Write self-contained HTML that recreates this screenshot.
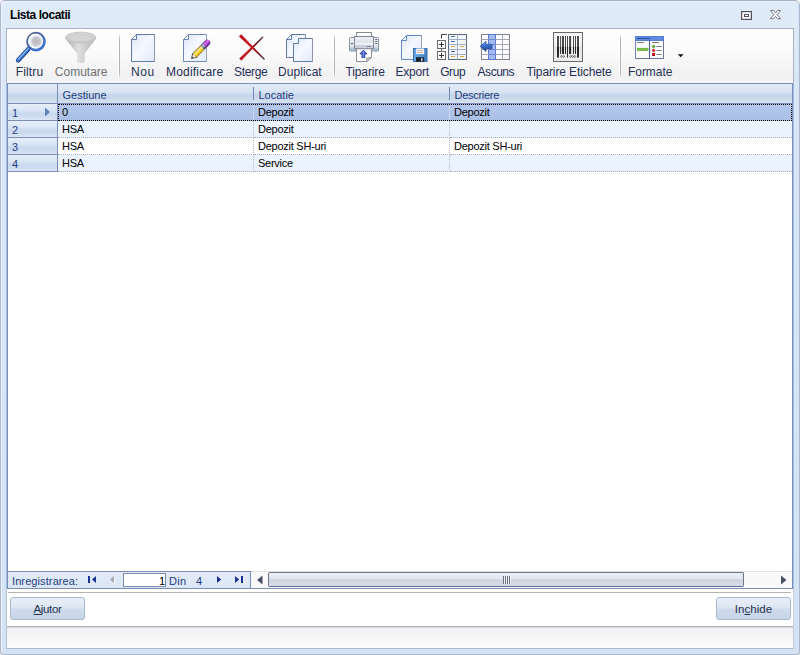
<!DOCTYPE html>
<html><head><meta charset="utf-8">
<title>Lista locatii</title>
<style>
*{box-sizing:border-box;margin:0;padding:0}
html,body{width:800px;height:655px;overflow:hidden;background:#fff}
body{font-family:"Liberation Sans","DejaVu Sans",sans-serif;font-size:11px;color:#000;position:relative}
.abs,body>div,body>svg{position:absolute}
#win{left:0;top:0;width:800px;height:655px;background:linear-gradient(#e0ebfa 0,#dfeaf9 30px,#d8e6f6 90px,#d4e3f4 100%);border:1px solid #acb6cc;border-top-color:#a7b0c7;border-radius:5px 5px 3px 3px;box-shadow:inset 1px 1px 0 #eef4fc, inset -1px -1px 0 #d6e2f6}
#title{left:10px;top:8px;font-weight:bold;font-size:12px;line-height:14px;letter-spacing:-0.45px;color:#000;white-space:nowrap}
#tb{left:6px;top:28px;width:788px;height:55px;border:1px solid #aab3c3;border-bottom:0;background:linear-gradient(#ffffff 0%,#fbfbfb 40%,#f1f1f2 88%,#f3f4f7 96%,#f5f7fc 100%)}
.tbl{top:65px;font-size:12px;line-height:14px;color:#252f58;white-space:nowrap}
.tbl.dis{color:#707074}
.sep{top:33px;width:1px;height:46px;background:linear-gradient(rgba(176,176,182,0),#b2b2b8 15%,#b2b2b8 85%,rgba(176,176,182,0));box-shadow:-1px 0 0 rgba(255,255,255,.7)}
.ico{top:32px;width:32px;height:32px}
#grid{left:7px;top:83px;width:786px;height:506px;background:#fff;border:1px solid #7d8db5;box-shadow:-1px 0 0 #a8bde6,1px 0 0 #a3c0e8}
.hdr{top:84px;height:20px;background:linear-gradient(#e1eaf6 0%,#d9e4f3 40%,#c8d6eb 58%,#cbd9ed 78%,#d7e2f2 100%);border-bottom:1px solid #7d8db5;color:#1f3d80;font-size:11px;line-height:23px;padding-left:4.5px;white-space:nowrap}
.ind{left:8px;width:50px;height:17px;background:linear-gradient(#e6eef9 0%,#dae5f4 40%,#c9d8ee 60%,#cfdcf0 80%,#dbe6f5 100%);border-right:1px solid #7d8db5;border-bottom:1px solid #7d8db5;color:#1f3d80;font-size:11px;line-height:18px;padding-left:4px;letter-spacing:-0.3px}
.cell{height:17px;font-size:11px;line-height:16px;padding-left:4px;border-bottom:1px dotted #a3adbf;border-right:1px dotted #b4bccb;white-space:nowrap;letter-spacing:-0.25px}
.alt{background:#ebf3ff}
.sel{background:linear-gradient(#b4c6eb,#abc0e7);border-right-color:#e8eefa}
#nav{left:8px;top:571px;width:243px;height:17px;background:linear-gradient(#e3ecf8,#dbe6f5);border-top:1px solid #7d8db5;border-right:1px solid #7d8db5;}
.nt{top:575px;font-size:11px;line-height:13px;color:#1f3d80;white-space:nowrap}
#sb{left:251px;top:571px;width:541px;height:17px;background:#f9f9f9;border-top:1px solid #e3e3e3}
#thumb{left:268px;top:572px;width:476px;height:15px;border:1px solid #6e7688;border-bottom-color:#5f6d90;border-radius:2px;background:linear-gradient(#eceff5 0%,#e0e4ee 45%,#ccd3de 52%,#d9dee7 100%)}
#pnl{left:7px;top:589px;width:786px;height:38px;background:#fff;box-shadow:1px 0 0 #c6cedc,-1px 0 0 #b4bfd2}
.btn{top:597px;height:23px;border:1px solid #a9b8d0;border-radius:3px;background:linear-gradient(#e9eff8 0%,#dde6f2 45%,#cfdbeb 55%,#c8d5e7 100%);font-size:11.5px;line-height:22px;text-align:center;color:#27334f;letter-spacing:-0.35px}
#status{left:7px;top:626px;width:786px;height:23px;border-top:1px solid #b5b8c0;border-bottom:1px solid #b0b9c9;background:linear-gradient(#d3d5da 0,#d3d5da 1px,#f2f2f4 1px,#f5f5f6 50%,#fcfcfc 100%);box-shadow:1px 0 0 #c6cedc,-1px 0 0 #b4bfd2}
u{text-decoration:underline}
</style></head><body>
<div id="win"></div>
<div id="title">Lista locatii</div>
<!--TITLEBTN-->
<div id="tb"></div>
<svg width="800" height="655" viewBox="0 0 800 655" style="left:0;top:0">
<defs>
<radialGradient id="lens" cx=".54" cy=".52" r=".5"><stop offset="0" stop-color="#c1b6ba"/><stop offset=".5" stop-color="#c6c4ca"/><stop offset=".74" stop-color="#e2eaf4"/><stop offset=".9" stop-color="#ffffff"/><stop offset="1" stop-color="#f4f8fd"/></radialGradient>
<linearGradient id="ring" x1="0" y1="0" x2="1" y2="1"><stop offset="0" stop-color="#58657f"/><stop offset=".4" stop-color="#4660a0"/><stop offset=".75" stop-color="#3e74d0"/><stop offset="1" stop-color="#2a52a8"/></linearGradient>
<linearGradient id="page" x1="0" y1="0" x2="1" y2="1"><stop offset="0" stop-color="#d9e4fa"/><stop offset=".45" stop-color="#f5f8ff"/><stop offset="1" stop-color="#e1ebfc"/></linearGradient>
<linearGradient id="fun" x1="0" y1="0" x2="1" y2="0"><stop offset="0" stop-color="#a6a6a6"/><stop offset=".42" stop-color="#dedede"/><stop offset="1" stop-color="#b2b2b2"/></linearGradient>
<linearGradient id="fun2" x1="0" y1="0" x2="0" y2="1"><stop offset="0" stop-color="#d8d8d8"/><stop offset="1" stop-color="#c2c2c2"/></linearGradient>
<linearGradient id="arr" x1="0" y1="0" x2="0" y2="1"><stop offset="0" stop-color="#7aa4ea"/><stop offset=".5" stop-color="#3567c8"/><stop offset="1" stop-color="#173a86"/></linearGradient>
<linearGradient id="bar" gradientUnits="userSpaceOnUse" x1="0" y1="36" x2="0" y2="57.7"><stop offset="0" stop-color="#4c4c4c"/><stop offset=".48" stop-color="#4a4a4a"/><stop offset=".5" stop-color="#1c1c1c"/><stop offset="1" stop-color="#3a3a3a"/></linearGradient>
<linearGradient id="bcbg" x1="0" y1="0" x2="0" y2="1"><stop offset="0" stop-color="#ffffff"/><stop offset=".47" stop-color="#fafafa"/><stop offset=".5" stop-color="#e6e6e6"/><stop offset="1" stop-color="#f4f4f4"/></linearGradient>
<linearGradient id="prn" x1="0" y1="0" x2="0" y2="1"><stop offset="0" stop-color="#eef1f5"/><stop offset=".6" stop-color="#dde2ea"/><stop offset="1" stop-color="#c2cad6"/></linearGradient>
<linearGradient id="prs" x1="0" y1="0" x2="0" y2="1"><stop offset="0" stop-color="#eef1f6"/><stop offset=".7" stop-color="#e0e5ee"/><stop offset=".8" stop-color="#b6c6de"/><stop offset="1" stop-color="#a9bad6"/></linearGradient>
<linearGradient id="upar" x1="0" y1="0" x2="1" y2="0"><stop offset="0" stop-color="#2038a8"/><stop offset=".5" stop-color="#6f88e6"/><stop offset="1" stop-color="#2038a8"/></linearGradient>
<linearGradient id="flop" x1="0" y1="0" x2="1" y2="0"><stop offset="0" stop-color="#6aa6e2"/><stop offset=".5" stop-color="#5a98d8"/><stop offset="1" stop-color="#3f7fc4"/></linearGradient>
<linearGradient id="pen" x1="0" y1="0" x2="0" y2="1"><stop offset="0" stop-color="#6a5210"/><stop offset=".14" stop-color="#d8b838"/><stop offset=".32" stop-color="#fff09a"/><stop offset=".62" stop-color="#f8d424"/><stop offset=".86" stop-color="#e0ae10"/><stop offset="1" stop-color="#5a3c06"/></linearGradient>
<linearGradient id="ers" x1="0" y1="0" x2="0" y2="1"><stop offset="0" stop-color="#6a2488"/><stop offset=".3" stop-color="#dc78f4"/><stop offset=".65" stop-color="#a444c8"/><stop offset="1" stop-color="#48106a"/></linearGradient>
<linearGradient id="band" x1="0" y1="0" x2="0" y2="1"><stop offset="0" stop-color="#3a4a50"/><stop offset=".35" stop-color="#b8c8d0"/><stop offset="1" stop-color="#202c34"/></linearGradient>
<linearGradient id="x1" gradientUnits="userSpaceOnUse" x1="240" y1="35.6" x2="264.3" y2="59.2"><stop offset="0" stop-color="#a80e17"/><stop offset=".1" stop-color="#c0141e"/><stop offset=".62" stop-color="#b8141d"/><stop offset=".8" stop-color="#6e1a24"/><stop offset="1" stop-color="#3e1a22"/></linearGradient>
<linearGradient id="x2" gradientUnits="userSpaceOnUse" x1="240.4" y1="59.4" x2="262.8" y2="37"><stop offset="0" stop-color="#a80e17"/><stop offset=".1" stop-color="#c0141e"/><stop offset=".55" stop-color="#b8141d"/><stop offset=".72" stop-color="#6e1a24"/><stop offset="1" stop-color="#3e1a22"/></linearGradient>
</defs>
<!-- title buttons -->
<g id="i-restore"><rect x="741.6" y="11.6" width="9.8" height="7.8" fill="#fdfdfe" stroke="#50535f" stroke-width="1.2"/><rect x="744.5" y="14.5" width="4" height="2" fill="#fff" stroke="#50535f" stroke-width="1"/></g>
<g id="i-close"><path d="M770.5 10.5 H773.6 L775.5 13.1 L777.4 10.5 H780.5 L777.1 14.7 L780.7 18.7 H777.4 L775.5 16.4 L773.6 18.7 H770.3 L773.9 14.7 Z" fill="#fdfdfe" stroke="#6a6d7a" stroke-width=".9" stroke-linejoin="miter"/></g>
<!-- Filtru -->
<g id="i-filtru">
<line x1="28.3" y1="49.3" x2="18.2" y2="60.3" stroke="#23448f" stroke-width="4.6" stroke-linecap="round"/>
<line x1="28.6" y1="48.6" x2="18.3" y2="59.9" stroke="#3f80dc" stroke-width="2.8" stroke-linecap="round"/>
<line x1="28.2" y1="48.4" x2="18.4" y2="59.2" stroke="#a9cdf7" stroke-width="1" stroke-linecap="round"/>
<circle cx="36" cy="41.6" r="9.8" fill="url(#ring)"/>
<circle cx="35.6" cy="41.1" r="7.7" fill="url(#lens)"/>
</g>
<!-- Comutare -->
<g id="i-comutare" opacity=".95">
<path d="M65.6 37.5 L66.4 40 L76.5 52.6 Q77.2 53.6 77.2 55 V61.6 C77.2 63.5 84.6 63.5 84.6 61.6 V55 Q84.6 53.6 85.4 52.6 L95 40 L95.8 37.5 Z" fill="url(#fun)"/>
<ellipse cx="80.7" cy="37.6" rx="15.1" ry="5.5" fill="url(#fun2)" stroke="#bcbcbc" stroke-width=".8"/>
<ellipse cx="80.9" cy="38.2" rx="11.5" ry="3.6" fill="#d3d3d3" stroke="#c6c6c6" stroke-width=".6"/>
</g>
<!-- Nou -->
<g id="i-nou">
<path d="M136.5 34.5 H154.5 V61.5 H131.5 V39.5 Z" fill="url(#page)" stroke="#6079a8" stroke-width="1"/>
<path d="M131.5 39.5 H136.5 V34.5 Z" fill="#f6f9ff" stroke="#6079a8" stroke-width="1" stroke-linejoin="round"/>
</g>
<path d="M154.5 35 V61" stroke="#8e96a6" stroke-width="1"/>
<!-- Modificare -->
<g id="i-modif">
<path d="M188.5 34.5 H206.5 V61.5 H183.5 V39.5 Z" fill="url(#page)" stroke="#6f88b6" stroke-width="1"/>
<path d="M183.5 39.5 H188.5 V34.5 Z" fill="#f6f9ff" stroke="#6f88b6" stroke-width="1" stroke-linejoin="round"/>
<path d="M206.5 35 V61" stroke="#99a2b4" stroke-width="1"/>
<g transform="translate(191.6 58.4) rotate(-45)">
<path d="M0 0 L4.5 -2.9 V2.9 Z" fill="#fff8e6" stroke="#4a4030" stroke-width=".8" stroke-linejoin="round"/>
<path d="M0 0 L1.6 -1 V1 Z" fill="#333"/>
<rect x="4.5" y="-2.9" width="10.5" height="5.8" fill="url(#pen)"/>
<rect x="15" y="-2.9" width="3" height="5.8" fill="url(#band)"/>
<path d="M18 -2.9 H22.3 A2.9 2.9 0 0 1 22.3 2.9 H18 Z" fill="url(#ers)"/>
</g>
</g>
<!-- Sterge -->
<g id="i-sterge">
<path d="M239.6 58.5 L241.4 60.3 L263.1 37.3 L262.6 36.8 Z" fill="url(#x2)" stroke="url(#x2)" stroke-width=".6" stroke-linejoin="round"/>
<path d="M239.3 36.5 L241.2 34.6 L264.6 59 L264.1 59.5 Z" fill="url(#x1)" stroke="url(#x1)" stroke-width=".6" stroke-linejoin="round"/>
</g>
<!-- Duplicat -->
<g id="i-dupl">
<path d="M291.5 34.5 H305.5 V57.5 H286.5 V39.5 Z" fill="url(#page)" stroke="#627aa6" stroke-width="1"/>
<path d="M286.5 39.5 H291.5 V34.5 Z" fill="#f6f9ff" stroke="#627aa6" stroke-width="1" stroke-linejoin="round"/>
<path d="M298.5 38.5 H312.5 V61.5 H293.5 V43.5 H298.5 Z" fill="url(#page)" stroke="#627aa6" stroke-width="1"/>
</g>
<path d="M312.5 39 V61 M305.5 35 V38" stroke="#8e96a6" stroke-width="1"/>
<!-- Tiparire -->
<g id="i-print">
<rect x="356.5" y="32.5" width="15" height="5" fill="#fff" stroke="#858b96" stroke-width="1"/>
<rect x="349.5" y="37.5" width="29" height="13.5" rx="1" fill="url(#prs)" stroke="#8a92a2" stroke-width="1"/>
<rect x="354.5" y="36.5" width="19" height="12" fill="url(#prn)" stroke="#7d8595" stroke-width="1"/>
<rect x="355" y="43.5" width="18" height="1" fill="#fff"/>
<rect x="355" y="45" width="18" height="3" fill="#c9d0da"/>
<rect x="366.5" y="46" width="4.5" height="1" fill="#7a8496"/>
<rect x="351" y="43" width="2" height="1.2" fill="#5a6272"/>
<rect x="375.2" y="39" width="2" height="1" fill="#5a6272"/><rect x="375.2" y="41" width="2" height="1" fill="#5a6272"/><rect x="375.2" y="43" width="2" height="1" fill="#5a6272"/>
<path d="M356.5 48.8 H371.5 V57.5 L367 61.5 H356.5 Z" fill="#fff" stroke="#8a8f98" stroke-width="1"/>
<path d="M371.5 57.5 L367 61.5 L366 58 Z" fill="#c4c8ce" stroke="#8a8f98" stroke-width=".7"/>
<path d="M363.4 50 L367 54 H364.9 V57.6 H361.9 V54 H359.8 Z" fill="url(#upar)" stroke="#1c2e96" stroke-width=".7"/>
</g>
<!-- Export -->
<g id="i-export">
<path d="M406.5 35.5 H421.5 V59.5 H401.5 V40.5 Z" fill="url(#page)" stroke="#6088c6" stroke-width="1"/>
<path d="M401.5 40.5 H406.5 V35.5 Z" fill="#f6f9ff" stroke="#6088c6" stroke-width="1" stroke-linejoin="round"/>
<path d="M421.5 36 V48" stroke="#9aa0ac" stroke-width="1"/>
<rect x="413.5" y="48.5" width="13.5" height="13" fill="url(#flop)" stroke="#3d6fae" stroke-width="1"/>
<rect x="416.2" y="48.5" width="8" height="5.6" fill="#fbfbfb"/>
<rect x="417.2" y="50" width="6" height=".9" fill="#d9a796"/><rect x="417.2" y="52" width="6" height=".9" fill="#d9a796"/>
<rect x="416" y="57.2" width="8.2" height="4.6" fill="#1e2226"/>
<rect x="421" y="58" width="1.6" height="3.2" fill="#b4cbe4"/>
</g>
<!-- Grup -->
<g id="i-grup">
<path d="M441.5 38.6 V34.5 H446.8" fill="none" stroke="#3c3c3c" stroke-width="1"/>
<path d="M441.5 48 V52" stroke="#555" stroke-width="1"/>
<rect x="437.5" y="40.5" width="8" height="8" fill="#fff" stroke="#6c6c6c" stroke-width="1"/>
<path d="M439 44.5 H444 M441.5 42 V47" stroke="#333" stroke-width="1.1"/>
<rect x="437.5" y="51.5" width="8" height="8" fill="#fff" stroke="#6c6c6c" stroke-width="1"/>
<path d="M439 55.5 H444 M441.5 53 V58" stroke="#333" stroke-width="1.1"/>
<rect x="448.5" y="34.5" width="18" height="25" fill="#f3f8fe" stroke="#5f6878" stroke-width="1"/>
<path d="M448.5 39.5 H466.5 M448.5 44.5 H466.5 M448.5 49.5 H466.5 M448.5 54.5 H466.5" stroke="#a3acc0" stroke-width="1"/>
<path d="M457.5 34.5 V59.5" stroke="#a3acc0" stroke-width="1"/>
<path d="M451 36.5 H455 M451 41.5 H455 M451 51.5 H455" stroke="#4a68b8" stroke-width="1"/>
<path d="M451 46.5 H455 M460 46.5 H464 M451 56.5 H455 M460 56.5 H464" stroke="#e8a43c" stroke-width="1"/>
</g>
<!-- Ascuns -->
<g id="i-ascuns">
<rect x="481.5" y="34.5" width="28" height="25" fill="#fdfdff" stroke="#80848f" stroke-width="1"/>
<rect x="488.5" y="34.5" width="7" height="25" fill="#a4bbf1" stroke="#5f78cf" stroke-width="1"/>
<path d="M481.5 39.5 H509.5 M481.5 44.5 H509.5 M481.5 49.5 H509.5 M481.5 54.5 H509.5 M502.5 34.5 V59.5" stroke="#a4a8b6" stroke-width="1"/>
<path d="M488.5 39.5 H495.5 M488.5 44.5 H495.5 M488.5 49.5 H495.5 M488.5 54.5 H495.5" stroke="#6a84d8" stroke-width="1"/>
<path d="M480 46.3 L486 41.2 V44.3 H492 V48.8 H486 V51.6 Z" fill="url(#arr)" stroke="#1d3f90" stroke-width=".6" stroke-linejoin="round"/>
</g>
<!-- Etichete -->
<g id="i-barcode">
<rect x="553.5" y="32.5" width="29" height="29" fill="url(#bcbg)" stroke="#686868" stroke-width="1"/>
<rect x="555" y="34" width="26" height="26" fill="none" stroke="#e2e2e2" stroke-width=".8"/>
<g fill="url(#bar)">
<rect x="557" y="36" width="2" height="21.7"/><rect x="560.1" y="36" width="1" height="18"/><rect x="562" y="36" width="2" height="18"/><rect x="565" y="36" width="1" height="18"/><rect x="567" y="36" width="1" height="21.7"/><rect x="569.1" y="36" width="2" height="18"/><rect x="573" y="36" width="1" height="18"/><rect x="575" y="36" width="1" height="18"/><rect x="577" y="36" width="2" height="21.7"/>
</g>
<g fill="none" stroke="#3a3a3a" stroke-width=".6"><circle cx="561.4" cy="56.5" r=".9"/><circle cx="563.6" cy="56.5" r=".9"/><circle cx="570.4" cy="56.5" r=".9"/><circle cx="572.6" cy="56.5" r=".9"/><circle cx="574.8" cy="56.5" r=".9"/></g>
</g>
<!-- Formate -->
<g id="i-formate">
<rect x="635.5" y="36.5" width="28" height="22" fill="#fdfdfe" stroke="#6a82be" stroke-width="1"/><path d="M636 58.5 H663.5 V41" fill="none" stroke="#6d7694" stroke-width="1"/>
<rect x="635.5" y="36.5" width="28" height="4" fill="#5f8ce0" stroke="#5b7fd0" stroke-width="1"/>
<rect x="637" y="38" width="13" height="1" fill="#2c4c9c"/>
<path d="M649.5 40.5 V58.5" stroke="#4a5f98" stroke-width="1"/>
<rect x="637" y="42" width="7" height="1" fill="#7c8088"/><rect x="652" y="42" width="7" height="1" fill="#7c8088"/>
<rect x="637.2" y="48.2" width="10.8" height="2.4" fill="#7cc446" stroke="#58a028" stroke-width=".6"/>
<circle cx="653.6" cy="46.5" r="1.3" fill="#62b03a" stroke="#3c8420" stroke-width=".5"/>
<circle cx="653.6" cy="50.5" r="1.3" fill="#e01c24" stroke="#a8141c" stroke-width=".5"/>
<rect x="652.1" y="53" width="3" height="3" fill="#b4141c"/>
<rect x="656.3" y="46" width="5.5" height="1" fill="#80848c"/><rect x="656.3" y="50" width="5.5" height="1" fill="#80848c"/><rect x="656.3" y="54" width="5.5" height="1" fill="#80848c"/>
<path d="M677.8 54.2 H683.6 L680.7 57.3 Z" fill="#111"/>
</g>
</svg>

<div class="sep" style="left:119px"></div>
<div class="sep" style="left:334px"></div>
<div class="sep" style="left:620px"></div>
<div class="tbl" id="l0" style="left:15.7px;letter-spacing:0.15px">Filtru</div>
<div class="tbl dis" id="l1" style="left:54.8px;letter-spacing:0.00px">Comutare</div>
<div class="tbl" id="l2" style="left:131.0px;letter-spacing:0.55px">Nou</div>
<div class="tbl" id="l3" style="left:166.0px;letter-spacing:0.20px">Modificare</div>
<div class="tbl" id="l4" style="left:234.0px;letter-spacing:-0.33px">Sterge</div>
<div class="tbl" id="l5" style="left:278.0px;letter-spacing:0.05px">Duplicat</div>
<div class="tbl" id="l6" style="left:345.4px;letter-spacing:-0.10px">Tiparire</div>
<div class="tbl" id="l7" style="left:395.6px;letter-spacing:-0.26px">Export</div>
<div class="tbl" id="l8" style="left:440.2px;letter-spacing:-0.40px">Grup</div>
<div class="tbl" id="l9" style="left:477.6px;letter-spacing:-0.48px">Ascuns</div>
<div class="tbl" id="l10" style="left:526.5px;letter-spacing:-0.11px">Tiparire Etichete</div>
<div class="tbl" id="l11" style="left:628.0px;letter-spacing:-0.05px">Formate</div>
<div id="grid"></div>
<div class="hdr" style="left:8px;width:50px;border-right:1px solid #7d8db5"></div>
<div class="hdr" style="left:58px;width:196px">Gestiune</div>
<div class="hdr" style="left:254px;width:196px">Locatie</div>
<div class="hdr" style="left:450px;width:342px;letter-spacing:-0.28px">Descriere</div>
<div class="abs" style="left:253px;top:87px;width:1px;height:13px;background:#6e89ba"></div>
<div class="abs" style="left:449px;top:87px;width:1px;height:13px;background:#6e89ba"></div>
<div class="ind" style="top:104px">1</div>
<div class="ind" style="top:121px">2</div>
<div class="ind" style="top:138px">3</div>
<div class="ind" style="top:155px">4</div>
<svg width="8" height="11" style="left:44px;top:107px"><path d="M1 .5 V9.5 L6 5 Z" fill="#5e82bb"/></svg>
<div class="cell sel" style="left:58px;top:104px;width:196px">0</div>
<div class="cell sel" style="left:254px;top:104px;width:196px">Depozit</div>
<div class="cell sel" style="left:450px;top:104px;width:342px;border-right:0">Depozit</div>
<div class="cell alt" style="left:58px;top:121px;width:196px">HSA</div>
<div class="cell alt" style="left:254px;top:121px;width:196px">Depozit</div>
<div class="cell alt" style="left:450px;top:121px;width:342px;border-right:0"></div>
<div class="cell" style="left:58px;top:138px;width:196px">HSA</div>
<div class="cell" style="left:254px;top:138px;width:196px">Depozit SH-uri</div>
<div class="cell" style="left:450px;top:138px;width:342px;border-right:0">Depozit SH-uri</div>
<div class="cell alt" style="left:58px;top:155px;width:196px">HSA</div>
<div class="cell alt" style="left:254px;top:155px;width:196px">Service</div>
<div class="cell alt" style="left:450px;top:155px;width:342px;border-right:0"></div>
<div class="abs" style="left:58px;top:104px;width:734px;height:17px;border:1px dotted #000"></div>
<div id="nav"></div>
<div class="nt" style="left:12px;letter-spacing:0.1px">Inregistrarea:</div>
<div class="abs" style="left:123px;top:573px;width:43px;height:14px;background:#fff;border:1px solid #7a8cb0;font-size:11px;line-height:14px;text-align:right;padding-right:0;letter-spacing:-0.2px">1</div>
<div class="nt" style="left:169px;letter-spacing:0.3px">Din</div>
<div class="nt" style="left:196px">4</div>
<div id="sb"></div>
<div id="thumb"></div>
<svg width="800" height="655" viewBox="0 0 800 655" style="left:0;top:0">
<g fill="#1a3294"><rect x="88" y="576" width="2" height="7"/><path d="M96 576 V583 L92 579.5 Z"/>
<path d="M217 576 V583 L221.2 579.5 Z"/><path d="M235 576 V583 L239.2 579.5 Z"/><rect x="241" y="576" width="2" height="7"/></g>
<path d="M115 577 V584 L111 580.5 Z" fill="#f8fafd"/><path d="M114 576 V583 L110 579.5 Z" fill="#a8a8ab"/>
<path d="M262.5 575.5 V584.5 L257 580 Z" fill="#4a5068"/>
<path d="M781 575.5 V584.5 L786.5 580 Z" fill="#4a5068"/>
<path d="M503.5 576 V584 M505.5 576 V584 M507.5 576 V584 M509.5 576 V584" stroke="#6a7182" stroke-width="1"/>
<path d="M504.5 576 V584 M506.5 576 V584 M508.5 576 V584 M510.5 576 V584" stroke="#f2f4f8" stroke-width="1"/>
</svg>
<div id="pnl"></div>
<div class="abs" style="left:8px;top:592px;width:783px;height:1px;background:#b4b4b4"></div>
<div class="btn" style="left:10px;width:75px"><u>A</u>jutor</div>
<div class="btn" style="left:716px;width:75px;letter-spacing:0.05px">In<u>c</u>hide</div>
<div id="status"></div>
</body></html>
